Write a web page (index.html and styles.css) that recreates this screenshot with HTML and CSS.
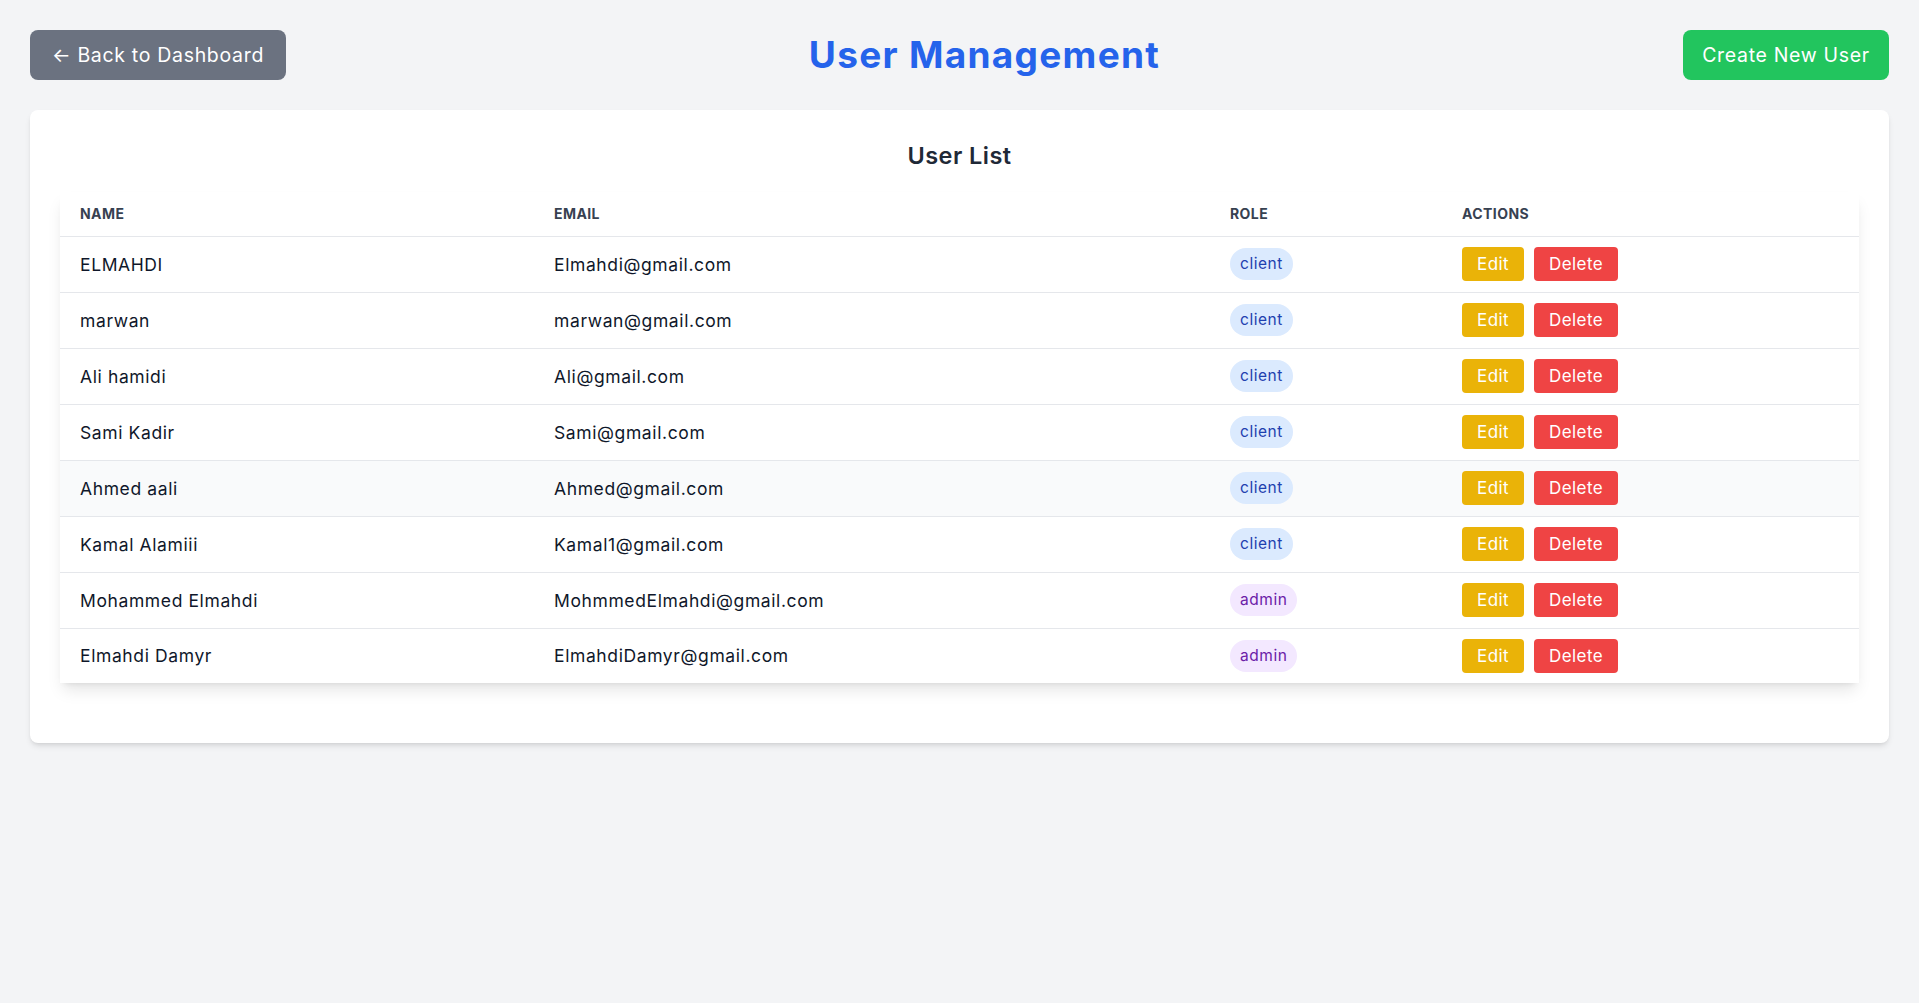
FILE: index.html
```html
<!DOCTYPE html>
<html lang="en">
<head>
<meta charset="utf-8">
<title>User Management</title>
<link rel="stylesheet" href="styles.css">
</head>
<body>
<div class="page">
  <header class="topbar">
    <a class="btn btn-back" href="#">← Back to Dashboard</a>
    <h1 class="title">User Management</h1>
    <a class="btn btn-create" href="#">Create New User</a>
  </header>

  <section class="card">
    <h2 class="card-title">User List</h2>
    <div class="table-wrap">
      <table class="users">
        <thead>
          <tr>
            <th class="col-name">Name</th>
            <th class="col-email">Email</th>
            <th class="col-role">Role</th>
            <th class="col-actions">Actions</th>
          </tr>
        </thead>
        <tbody>
          <tr>
            <td>ELMAHDI</td>
            <td>Elmahdi@gmail.com</td>
            <td><span class="badge badge-client">client</span></td>
            <td><div class="actions"><a class="act act-edit" href="#">Edit</a><a class="act act-delete" href="#">Delete</a></div></td>
          </tr>
          <tr>
            <td>marwan</td>
            <td>marwan@gmail.com</td>
            <td><span class="badge badge-client">client</span></td>
            <td><div class="actions"><a class="act act-edit" href="#">Edit</a><a class="act act-delete" href="#">Delete</a></div></td>
          </tr>
          <tr>
            <td>Ali hamidi</td>
            <td>Ali@gmail.com</td>
            <td><span class="badge badge-client">client</span></td>
            <td><div class="actions"><a class="act act-edit" href="#">Edit</a><a class="act act-delete" href="#">Delete</a></div></td>
          </tr>
          <tr>
            <td>Sami Kadir</td>
            <td>Sami@gmail.com</td>
            <td><span class="badge badge-client">client</span></td>
            <td><div class="actions"><a class="act act-edit" href="#">Edit</a><a class="act act-delete" href="#">Delete</a></div></td>
          </tr>
          <tr class="row-hover">
            <td>Ahmed aali</td>
            <td>Ahmed@gmail.com</td>
            <td><span class="badge badge-client">client</span></td>
            <td><div class="actions"><a class="act act-edit" href="#">Edit</a><a class="act act-delete" href="#">Delete</a></div></td>
          </tr>
          <tr>
            <td>Kamal Alamiii</td>
            <td>Kamal1@gmail.com</td>
            <td><span class="badge badge-client">client</span></td>
            <td><div class="actions"><a class="act act-edit" href="#">Edit</a><a class="act act-delete" href="#">Delete</a></div></td>
          </tr>
          <tr>
            <td>Mohammed Elmahdi</td>
            <td>MohmmedElmahdi@gmail.com</td>
            <td><span class="badge badge-admin">admin</span></td>
            <td><div class="actions"><a class="act act-edit" href="#">Edit</a><a class="act act-delete" href="#">Delete</a></div></td>
          </tr>
          <tr>
            <td>Elmahdi Damyr</td>
            <td>ElmahdiDamyr@gmail.com</td>
            <td><span class="badge badge-admin">admin</span></td>
            <td><div class="actions"><a class="act act-edit" href="#">Edit</a><a class="act act-delete" href="#">Delete</a></div></td>
          </tr>
        </tbody>
      </table>
    </div>
  </section>
</div>
</body>
</html>
```

FILE: styles.css
```css
* { box-sizing: border-box; }

html, body {
  margin: 0;
  padding: 0;
  background: #f3f4f6;
  font-family: Inter, "Open Sans", "Liberation Sans", sans-serif;
  color: #111827;
}

.page {
  padding: 30px;
}

.topbar {
  display: flex;
  align-items: center;
  justify-content: space-between;
  height: 50px;
  margin-bottom: 30px;
}

.btn {
  display: inline-flex;
  align-items: center;
  justify-content: center;
  height: 50px;
  padding: 0 18px;
  border-radius: 8px;
  color: #ffffff;
  font-size: 19.5px;
  letter-spacing: 0.035em;
  text-decoration: none;
  white-space: nowrap;
}

.btn-back {
  width: 256px;
  background: #6b7280;
}

.btn-create {
  width: 206px;
  background: #22c55e;
}

.title {
  margin: 0;
  font-size: 37px;
  line-height: 44px;
  font-weight: 700;
  color: #2563eb;
  letter-spacing: 0.035em;
}

.card {
  background: #ffffff;
  border-radius: 8px;
  padding: 30px;
  box-shadow: 0 4px 6px -1px rgba(0,0,0,0.1), 0 2px 4px -2px rgba(0,0,0,0.1);
}

.card-title {
  margin: 0 0 20px;
  text-align: center;
  font-size: 23.5px;
  line-height: 32px;
  font-weight: 600;
  color: #1f2937;
  letter-spacing: 0.02em;
}

.table-wrap {
  margin-bottom: 30px;
  background: #ffffff;
  box-shadow: 0 10px 15px -3px rgba(0,0,0,0.1), 0 4px 6px -4px rgba(0,0,0,0.1);
}

.users {
  width: 100%;
  border-collapse: collapse;
  table-layout: fixed;
}

.users th {
  height: 44px;
  padding: 0 20px;
  text-align: left;
  font-size: 14px;
  font-weight: 700;
  letter-spacing: 0.03em;
  text-transform: uppercase;
  color: #374151;
  border-bottom: 1px solid #e5e7eb;
  vertical-align: middle;
}

.col-name { width: 474px; }
.col-email { width: 676px; }
.col-role { width: 232px; }
.col-actions { width: auto; }

.users td {
  height: 56px;
  padding: 0 20px;
  font-size: 17.5px;
  letter-spacing: 0.035em;
  color: #0f172a;
  border-bottom: 1px solid #e5e7eb;
  vertical-align: middle;
  white-space: nowrap;
}

.users tbody tr:last-child td {
  border-bottom: none;
  height: 55px;
}

.row-hover td {
  background: #f9fafb;
}

.badge {
  display: inline-block;
  padding: 6px 10px;
  border-radius: 9999px;
  font-size: 15.5px;
  letter-spacing: 0.035em;
  line-height: 20px;
}

.badge-client {
  background: #dbeafe;
  color: #1e40af;
}

.badge-admin {
  background: #f3e8ff;
  color: #6b21a8;
}

.actions {
  display: flex;
  gap: 10px;
}

.act {
  display: inline-block;
  padding: 5px 15px;
  border-radius: 4px;
  color: #ffffff;
  font-size: 17px;
  letter-spacing: 0.025em;
  line-height: 24px;
  text-decoration: none;
}

.act-edit { background: #eab308; }
.act-delete { background: #ef4444; }
```
